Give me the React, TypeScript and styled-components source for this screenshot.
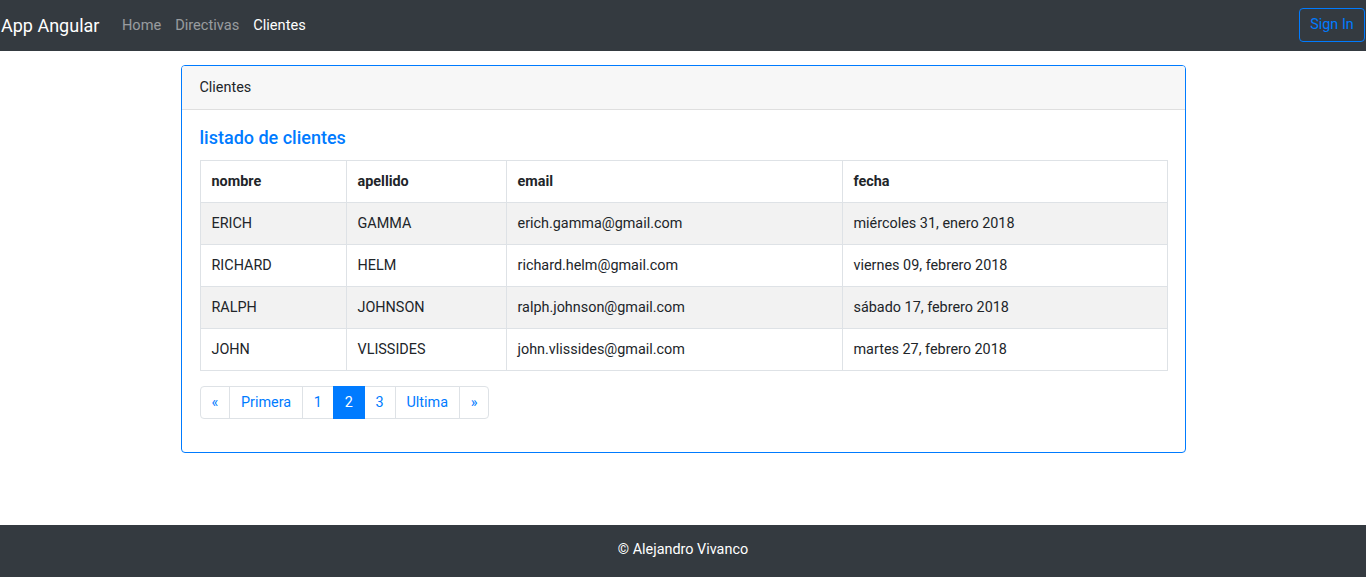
import React from "react";
import styled, { createGlobalStyle } from "styled-components";

const GlobalStyle = createGlobalStyle`
  html, body { margin: 0; padding: 0; }
  body {
    font-family: Roboto, "Noto Sans", "Liberation Sans", sans-serif;
    font-size: 14.4px;
    color: #212529;
    background: #fff;
  }
  * { box-sizing: border-box; }
`;

const Page = styled.div`
  min-height: 100vh;
  display: flex;
  flex-direction: column;
`;

const Navbar = styled.nav`
  height: 51px;
  background: #343a40;
  display: flex;
  align-items: center;
  padding: 0 1px 0 1px;
`;

const Brand = styled.a`
  color: #fff;
  font-size: 18px;
  line-height: 27px;
  margin-right: 15.5px;
  text-decoration: none;
  white-space: nowrap;
`;

const NavList = styled.ul`
  display: flex;
  list-style: none;
  margin: 0;
  padding: 0;
  flex: 1;
`;

const NavLink = styled.a<{ $active?: boolean }>`
  display: block;
  padding: 7px 7px;
  color: ${(p) => (p.$active ? "#fff" : "rgba(255,255,255,.5)")};
  font-size: 14.6px;
  line-height: 21px;
  text-decoration: none;
`;

const SignIn = styled.button`
  background: transparent;
  border: 1px solid #007bff;
  color: #007bff;
  border-radius: 4px;
  font-family: inherit;
  font-size: 14.4px;
  line-height: 21px;
  padding: 5px 10px;
  height: 34px;
  width: 66px;
  margin-top: -2px;
`;

const Main = styled.main`
  flex: 1;
  padding-top: 14px;
`;

const Card = styled.section`
  width: 1005px;
  margin: 0 auto;
  border: 1px solid #007bff;
  border-radius: 4px;
`;

const CardHeader = styled.div`
  height: 44px;
  display: flex;
  align-items: center;
  padding: 0 18px;
  background: #f7f7f7;
  border-bottom: 1px solid #dfdfdf;
  border-radius: 3px 3px 0 0;
  font-size: 14.4px;
`;

const CardBody = styled.div`
  padding: 18px 18px 18px;
`;

const Title = styled.h5`
  margin: 0 0 12px;
  color: #007bff;
  font-size: 18px;
  font-weight: 500;
  line-height: 20px;
`;

const Table = styled.table`
  width: 967px;
  border-collapse: collapse;
  table-layout: fixed;
`;

const Row = styled.tr<{ $striped?: boolean }>`
  background: ${(p) => (p.$striped ? "#f2f2f2" : "#fff")};
`;

const Th = styled.th`
  border: 1px solid #dee2e6;
  height: 42px;
  padding: 0 11px;
  text-align: left;
  font-weight: 700;
  font-size: 14.4px;
`;

const Td = styled.td`
  border: 1px solid #dee2e6;
  height: 42px;
  padding: 0 11px;
  font-size: 14.4px;
`;

const Pagination = styled.ul`
  display: flex;
  list-style: none;
  margin: 15px 0 15px;
  padding: 0;
`;

const PageItem = styled.li<{ $active?: boolean }>`
  height: 33px;
  display: flex;
  align-items: center;
  padding: 0 10.9px;
  margin-left: -1px;
  border: 1px solid ${(p) => (p.$active ? "#007bff" : "#dee2e6")};
  background: ${(p) => (p.$active ? "#007bff" : "#fff")};
  color: ${(p) => (p.$active ? "#fff" : "#007bff")};
  position: relative;
  z-index: ${(p) => (p.$active ? 1 : 0)};
  &:first-child {
    margin-left: 0;
    border-radius: 4px 0 0 4px;
  }
  &:last-child {
    border-radius: 0 4px 4px 0;
  }
`;

const Footer = styled.footer`
  height: 52px;
  padding-bottom: 4px;
  background: #343a40;
  color: #fff;
  display: flex;
  align-items: center;
  justify-content: center;
  font-size: 14.4px;
`;

const clientes = [
  ["ERICH", "GAMMA", "erich.gamma@gmail.com", "miércoles 31, enero 2018"],
  ["RICHARD", "HELM", "richard.helm@gmail.com", "viernes 09, febrero 2018"],
  ["RALPH", "JOHNSON", "ralph.johnson@gmail.com", "sábado 17, febrero 2018"],
  ["JOHN", "VLISSIDES", "john.vlissides@gmail.com", "martes 27, febrero 2018"],
];

const pages = [
  { label: "«" },
  { label: "Primera" },
  { label: "1" },
  { label: "2", active: true },
  { label: "3" },
  { label: "Ultima" },
  { label: "»" },
];

export default function App() {
  return (
    <Page>
      <GlobalStyle />
      <Navbar>
        <Brand>App Angular</Brand>
        <NavList>
          <li><NavLink>Home</NavLink></li>
          <li><NavLink>Directivas</NavLink></li>
          <li><NavLink $active>Clientes</NavLink></li>
        </NavList>
        <SignIn>Sign In</SignIn>
      </Navbar>
      <Main>
        <Card>
          <CardHeader>Clientes</CardHeader>
          <CardBody>
            <Title>listado de clientes</Title>
            <Table>
              <colgroup>
                <col style={{ width: 146 }} />
                <col style={{ width: 160 }} />
                <col style={{ width: 336 }} />
                <col style={{ width: 325 }} />
              </colgroup>
              <thead>
                <tr>
                  <Th>nombre</Th>
                  <Th>apellido</Th>
                  <Th>email</Th>
                  <Th>fecha</Th>
                </tr>
              </thead>
              <tbody>
                {clientes.map((c, i) => (
                  <Row key={c[2]} $striped={i % 2 === 0}>
                    {c.map((v) => (
                      <Td key={v}>{v}</Td>
                    ))}
                  </Row>
                ))}
              </tbody>
            </Table>
            <Pagination>
              {pages.map((p) => (
                <PageItem key={p.label} $active={p.active}>{p.label}</PageItem>
              ))}
            </Pagination>
          </CardBody>
        </Card>
      </Main>
      <Footer>© Alejandro Vivanco</Footer>
    </Page>
  );
}
